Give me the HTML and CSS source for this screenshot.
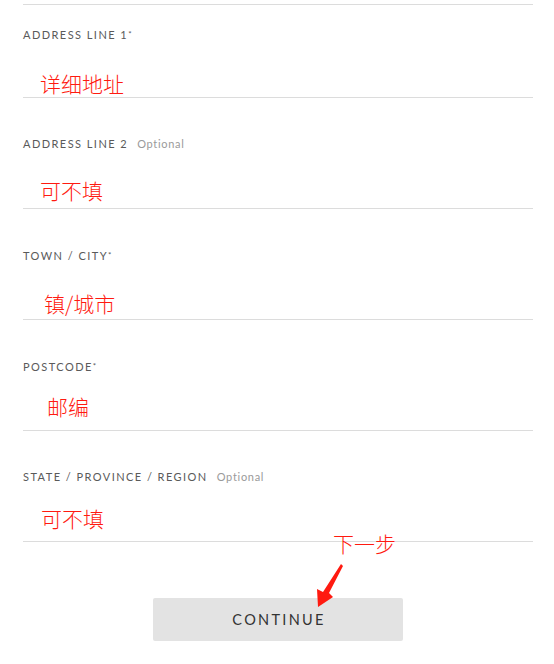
FILE: index.html
```html
<!DOCTYPE html>
<html lang="en">
<head>
<meta charset="utf-8">
<title>Address form</title>
<link rel="stylesheet" href="styles.css">
</head>
<body>
<div class="form">
  <div class="top-rule"></div>

  <div class="field field--first">
    <div class="label">Address Line 1<span class="req">*</span></div>
    <div class="value value--a">详细地址</div>
  </div>

  <div class="field">
    <div class="label">Address Line 2<span class="optional">Optional</span></div>
    <div class="value value--b">可不填</div>
  </div>

  <div class="field">
    <div class="label">Town / City<span class="req">*</span></div>
    <div class="value value--c">镇/城市</div>
  </div>

  <div class="field">
    <div class="label">Postcode<span class="req">*</span></div>
    <div class="value value--d">邮编</div>
  </div>

  <div class="field">
    <div class="label">State / Province / Region<span class="optional">Optional</span></div>
    <div class="value value--e">可不填</div>
  </div>

  <div class="actions">
    <button class="continue" type="button">Continue</button>
    <div class="note">下一步</div>
    <svg class="arrow" width="30" height="46" viewBox="0 0 30 46" aria-hidden="true">
      <polygon points="25,0 27,2 13,29 17,33 2,43 1,25 7,28" fill="#ff1a10"/>
    </svg>
  </div>
</div>
</body>
</html>
```

FILE: styles.css
```css
* { box-sizing: border-box; }

html, body {
  margin: 0;
  padding: 0;
  background: #ffffff;
}

.form {
  width: 510px;
  margin-left: 23px;
  font-family: "Lato", "Liberation Sans", sans-serif;
}

.top-rule {
  margin-top: 4px;
  height: 1px;
  background: #dcdcdc;
}

.field {
  height: 111px;
  border-bottom: 1px solid #dcdcdc;
  display: flex;
  flex-direction: column;
  padding-top: 39px;
}

.field--first {
  height: 93px;
  padding-top: 22px;
}

.label {
  font-size: 11px;
  line-height: 14px;
  letter-spacing: 1.45px;
  text-transform: uppercase;
  color: #5a5a5a;
  white-space: nowrap;
}

.req {
  font-size: 8px;
  vertical-align: 2px;
  letter-spacing: 0;
}

.optional {
  text-transform: none;
  color: #9a9a9a;
  letter-spacing: 0.7px;
  margin-left: 9px;
}

.value {
  margin-top: auto;
  font-family: "Noto Sans CJK SC", sans-serif;
  font-weight: 300;
  font-size: 21px;
  line-height: 24px;
  color: #ff1a10;
}

.value--a { padding-left: 17px; margin-bottom: 2px; }
.value--b { padding-left: 17px; margin-bottom: 6px; }
.value--c { padding-left: 21px; margin-bottom: 4px; }
.value--d { padding-left: 24px; margin-bottom: 12px; }
.value--e { padding-left: 18px; margin-bottom: 11px; }

.actions {
  position: relative;
  display: flex;
  justify-content: center;
  padding-top: 56px;
}

.continue {
  width: 250px;
  height: 43px;
  border: none;
  border-radius: 2px;
  background: #e3e3e3;
  color: #333333;
  font-family: "Lato", "Liberation Sans", sans-serif;
  font-size: 14.5px;
  letter-spacing: 2.3px;
  text-transform: uppercase;
  padding: 0;
  padding-left: 2px;
}

.note {
  position: absolute;
  left: 310px;
  top: -11px;
  font-family: "Noto Sans CJK SC", sans-serif;
  font-weight: 300;
  font-size: 21px;
  line-height: 24px;
  color: #ff1a10;
}

.arrow {
  position: absolute;
  left: 293px;
  top: 22px;
}
```
